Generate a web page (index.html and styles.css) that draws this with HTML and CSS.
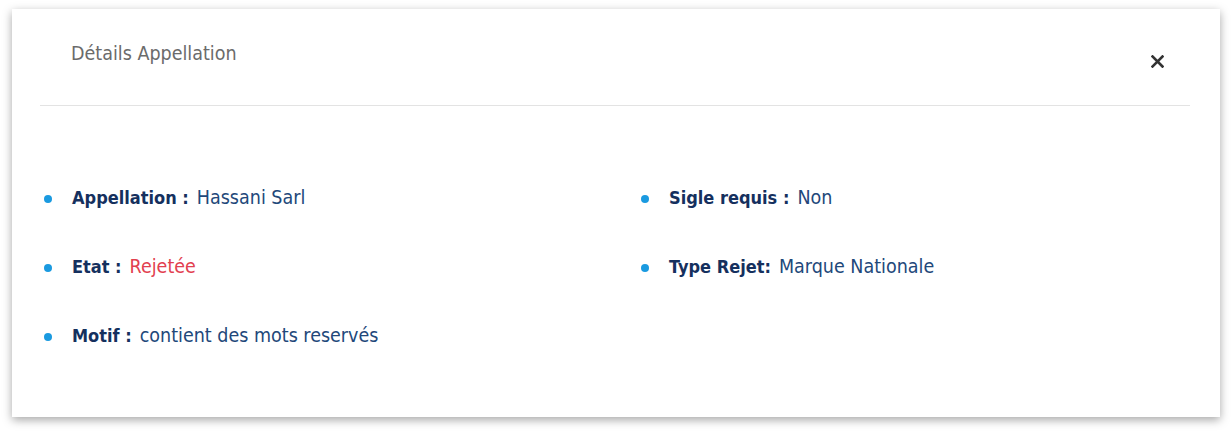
FILE: index.html
```html
<!DOCTYPE html>
<html lang="fr">
<head>
<meta charset="utf-8">
<title>Détails Appellation</title>
<link rel="stylesheet" href="styles.css">
</head>
<body>
<div class="modal">
  <div class="modal-header">
    <h2 class="modal-title">Détails Appellation</h2>
    <button class="close" aria-label="Fermer">
      <svg width="13" height="13" viewBox="0 0 13 13"><path d="M1.5 1.5 L11.5 11.5 M11.5 1.5 L1.5 11.5" stroke="#333" stroke-width="2.6" stroke-linecap="square"/></svg>
    </button>
  </div>
  <div class="modal-body">
    <ul class="col">
      <li><span class="label">Appellation :</span> <span class="value">Hassani Sarl</span></li>
      <li><span class="label">Etat :</span> <span class="value rejected">Rejetée</span></li>
      <li><span class="label">Motif :</span> <span class="value">contient des mots reservés</span></li>
    </ul>
    <ul class="col">
      <li><span class="label">Sigle requis :</span> <span class="value">Non</span></li>
      <li><span class="label">Type Rejet:</span> <span class="value">Marque Nationale</span></li>
    </ul>
  </div>
</div>
</body>
</html>
```

FILE: styles.css
```css
html, body {
  margin: 0;
  padding: 0;
  background: #ffffff;
}
body {
  padding: 9px 12px 15px 12px;
  font-family: "DejaVu Sans Condensed", "Roboto", sans-serif;
}
.modal {
  width: 1208px;
  height: 408px;
  background: #fff;
  box-shadow: 0 3px 9px rgba(0, 0, 0, 0.35);
  box-sizing: border-box;
  padding: 0 30px 0 28px;
}
.modal-header {
  display: flex;
  justify-content: space-between;
  align-items: flex-start;
  border-bottom: 1px solid #e3e3e3;
  height: 97px;
  box-sizing: border-box;
  padding: 34px 26px 0 31px;
}
.modal-title {
  margin: 0;
  font-size: 19.5px;
  font-weight: normal;
  color: #6b6b6b;
  line-height: 22px;
}
.close {
  border: 0;
  background: none;
  padding: 0;
  margin-top: 12px;
  width: 13px;
  height: 13px;
  display: flex;
}
.modal-body {
  display: grid;
  grid-template-columns: 597px 1fr;
  padding-top: 81px;
}
.col {
  list-style: none;
  margin: 0;
  padding: 0 0 0 4px;
  display: flex;
  flex-direction: column;
  gap: 47px;
}
.col li {
  display: flex;
  align-items: center;
  gap: 8px;
  font-size: 19.5px;
  line-height: 22px;
  position: relative;
  padding-left: 28px;
}
.col li::before {
  content: "";
  position: absolute;
  left: 0;
  top: 8px;
  width: 8px;
  height: 8px;
  border-radius: 50%;
  background: #1a9ae0;
}
.label {
  font-weight: bold;
  font-size: 18px;
  color: #15305e;
}
.value {
  color: #22487a;
}
.value.rejected {
  color: #e2404f;
}
```
